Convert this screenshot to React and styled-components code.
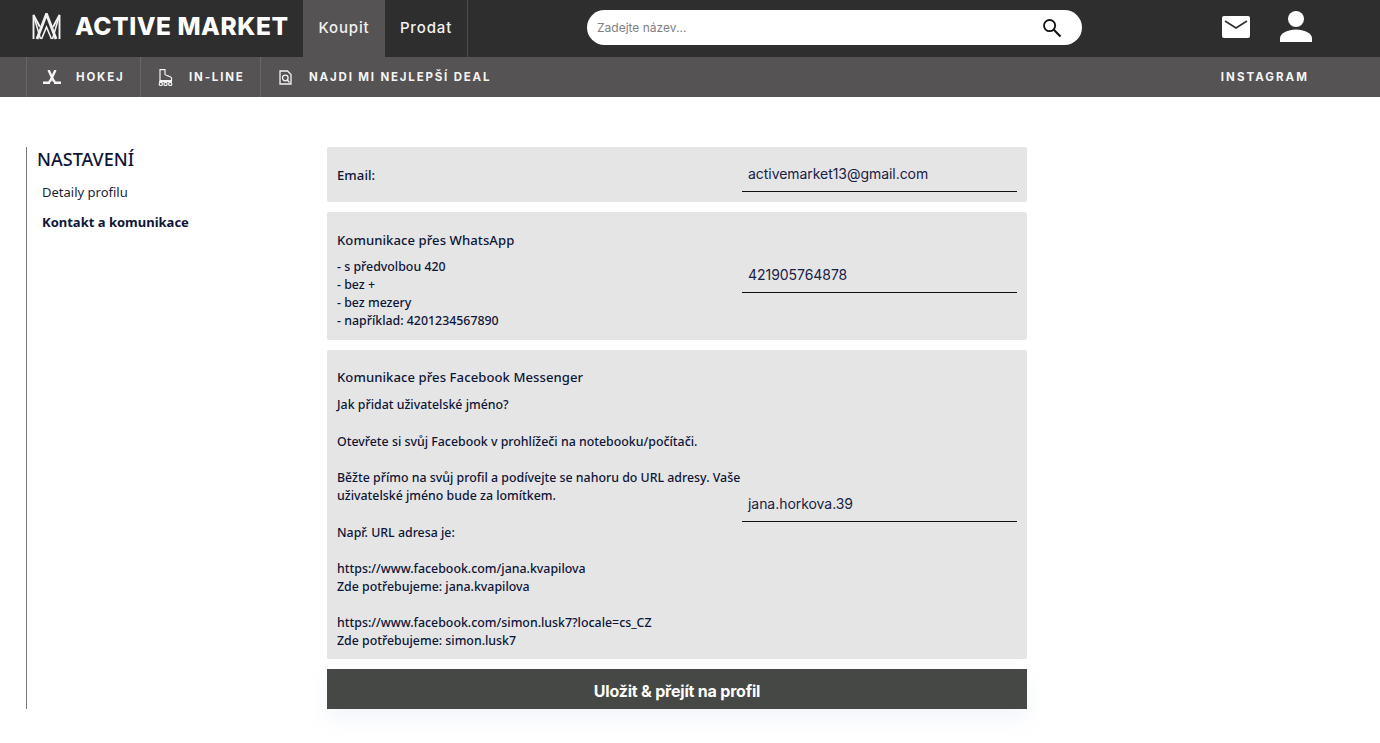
import React from "react";
import styled, { createGlobalStyle } from "styled-components";

const Global = createGlobalStyle`
  html, body { margin: 0; padding: 0; background: #fff; overflow: hidden; height: 743px; }
  * { box-sizing: border-box; }
`;
const display = `"Inter", "Liberation Sans", sans-serif`;
const body = `"Noto Sans", "Open Sans", sans-serif`;

const TopBar = styled.header`
  height: 57px; background: #2e2e2e; display: flex; align-items: stretch; position: relative;
`;
const Brand = styled.div`
  width: 303px; padding: 0 0 4px 32px; display: flex; align-items: center; gap: 14px; color: #fff;
`;
const BrandName = styled.span`
  font: 800 25px/1 ${display}; letter-spacing: 0.55px; white-space: nowrap; transform: scaleX(0.98); transform-origin: left;
`;
const Tab = styled.a`
  width: ${p => p.$w}px; display: flex; align-items: center; justify-content: center; padding-bottom: 2px;
  font: 500 15px/1 ${display}; letter-spacing: 0.85px; color: #f2f2f2;
  background: ${p => p.$active ? "#555353" : "transparent"};
  border-right: ${p => p.$line ? "1px solid #4c4c4c" : "none"};
`;
const SearchWrap = styled.div`
  margin-left: 119px; margin-top: 10px; width: 495px; height: 35px; border-radius: 18px; background: #fff;
  display: flex; align-items: center; justify-content: space-between; padding: 0 20px 0 10px;
`;
const SearchText = styled.span`
  font: 400 12px/1 ${display}; color: #808080;
`;
const IconGroup = styled.div`
  margin-left: 140px; padding-bottom: 4px; display: flex; align-items: center; gap: 30px;
`;
const SubBar = styled.nav`
  height: 40px; background: #555353; display: flex; align-items: stretch; padding-left: 26px;
`;
const SubItem = styled.a`
  width: ${p => p.$w}px; display: flex; align-items: center; padding-left: ${p => p.$pad}px;
  gap: ${p => p.$gap}px; color: #f5f5f5; border-left: 1px solid #696767;
  font: 700 11.5px/1 ${display}; letter-spacing: 1.82px; white-space: nowrap;
`;
const SubText = styled.span`padding-top: 2px;`;
const SubRight = styled.a`
  margin-left: auto; margin-right: 71px; align-self: center; padding-top: 2px; color: #f5f5f5;
  font: 700 11.5px/1 ${display}; letter-spacing: 2.05px;
`;
const Main = styled.main`
  display: flex; align-items: flex-start; padding: 50px 0 0 26px;
`;
const Sidebar = styled.aside`
  width: 301px; height: 562px; border-left: 1px solid #777; padding-left: 10px;
`;
const SideTitle = styled.h2`
  margin: 0; font: 500 18px/24px ${body}; color: #0e1638;
`;
const SideLink = styled.div`
  margin: ${p => p.$mt}px 0 0 5px; font: ${p => p.$bold ? 700 : 400} 13px/18px ${body};
  color: ${p => p.$bold ? "#0e1638" : "#1b1f35"};
`;
const Form = styled.form`
  width: 700px; display: flex; flex-direction: column; gap: 10px;
`;
const Row = styled.section`
  background: #e5e5e5; border-radius: 2px; height: ${p => p.$h}px; padding: 0 10px;
  display: flex; align-items: center; justify-content: space-between;
`;
const Info = styled.div`
  width: 405px; padding-top: ${p => p.$pt}px; color: #0e1638; font: 500 12.36px/18.15px ${body};
`;
const Label = styled.div`
  font: 500 13.1px/18px ${body}; letter-spacing: 0.07px; color: #0e1638; margin-bottom: ${p => p.$mb || 0}px;
`;
const Lines = styled.div`white-space: pre-line;`;
const Field = styled.div`
  width: 275px; height: ${p => p.$h || 36}px; padding: 0 6px; margin-top: ${p => p.$mt || 0}px; display: flex; align-items: center;
  border-bottom: 1px solid #111; color: #1a2145; font: 400 14px/1 ${display}; letter-spacing: -0.05px;
`;
const SaveButton = styled.button`
  height: 40px; border: 0; background: #454845; color: #fff; border-radius: 0; padding: 0;
  font: 700 16px/45px ${display}; letter-spacing: -0.2px; text-align: center;
  box-shadow: 0 10px 20px rgba(160, 175, 215, 0.13);
  display: block; width: 100%; overflow: hidden;
`;

const Logo = () => (
  <svg width="29" height="27" viewBox="0 0 29 27" fill="none" stroke="#f2f2f2" strokeWidth="1.9">
    <path d="M1.5 26V2L8 14M27.5 26V2L21 14" />
    <path d="M1.5 2L8.5 26M27.5 2L20.5 26" strokeWidth="1.5" />
    <path d="M5 26L14.5 1L24 26" strokeWidth="2.8" />
    <path d="M9.5 26L14.5 14L19.5 26" strokeWidth="1.6" />
  </svg>
);
const Search = () => (
  <svg width="20" height="20" viewBox="0 0 20 20" fill="none" stroke="#111" strokeWidth="1.8">
    <circle cx="7.6" cy="7.6" r="5.6" /><path d="M11.8 11.8L18.5 18.5" strokeWidth="2.1" />
  </svg>
);
const Mail = () => (
  <svg width="28" height="22" viewBox="0 0 28 22">
    <rect width="28" height="22" rx="2" fill="#fff" />
    <path d="M3 5L14 12L25 5" fill="none" stroke="#2e2e2e" strokeWidth="1.6" />
  </svg>
);
const User = () => (
  <svg width="32" height="31" viewBox="0 0 32 31" fill="#fff">
    <circle cx="16" cy="8" r="8" />
    <path d="M0 31V27.5C0 22 8 18.5 16 18.5S32 22 32 27.5V31Z" />
  </svg>
);
const Stick = () => (
  <svg width="18" height="14" viewBox="0 0 18 14" fill="none" stroke="#f5f5f5">
    <path d="M5.5 0L10.5 10.5L12 12M12.5 0L7.5 10.5L6 12" strokeWidth="2.4" />
    <path d="M0 12.7H7M11 12.7H18" strokeWidth="2.4" />
  </svg>
);
const Skate = () => (
  <svg width="15" height="17" viewBox="0 0 15 17" fill="none" stroke="#f5f5f5" strokeWidth="1.2">
    <path d="M2 .7H7V5.5C8 7 13 7 13.5 9V11.5H2ZM1 12.7H14" />
    <circle cx="2.8" cy="15" r="1.6" /><circle cx="7.5" cy="15" r="1.6" /><circle cx="12.2" cy="15" r="1.6" />
  </svg>
);
const Deal = () => (
  <svg width="13" height="15" viewBox="0 0 13 15" fill="none" stroke="#f5f5f5" strokeWidth="1.3">
    <path d="M1 1H8.5L12 4.5V14H1Z" /><circle cx="6.3" cy="8" r="2.8" /><path d="M8.3 10L10.5 12.5" />
  </svg>
);

export default function App() {
  return (
    <>
      <Global />
      <TopBar>
        <Brand><Logo /><BrandName>ACTIVE MARKET</BrandName></Brand>
        <Tab $w={82} $active>Koupit</Tab>
        <Tab $w={83} $line>Prodat</Tab>
        <SearchWrap><SearchText>Zadejte název...</SearchText><Search /></SearchWrap>
        <IconGroup><Mail /><User /></IconGroup>
      </TopBar>
      <SubBar>
        <SubItem $w={114} $pad={16} $gap={15}><Stick /><SubText>HOKEJ</SubText></SubItem>
        <SubItem $w={120} $pad={17} $gap={16}><Skate /><SubText>IN-LINE</SubText></SubItem>
        <SubItem $w={260} $pad={18} $gap={17}><Deal /><SubText>NAJDI MI NEJLEPŠÍ DEAL</SubText></SubItem>
        <SubRight>INSTAGRAM</SubRight>
      </SubBar>
      <Main>
        <Sidebar>
          <SideTitle>NASTAVENÍ</SideTitle>
          <SideLink $mt={12}>Detaily profilu</SideLink>
          <SideLink $mt={12} $bold>Kontakt a komunikace</SideLink>
        </Sidebar>
        <Form>
          <Row $h={55}>
            <Label>Email:</Label>
            <Field $mt={-1}>activemarket13@gmail.com</Field>
          </Row>
          <Row $h={128}>
            <Info $pt={9}>
              <Label $mb={9}>Komunikace přes WhatsApp</Label>
              <Lines>{"- s předvolbou 420\n- bez +\n- bez mezery\n- například: 4201234567890"}</Lines>
            </Info>
            <Field $h={35} $mt={-2}>421905764878</Field>
          </Row>
          <Row $h={309}>
            <Info $pt={10}>
              <Label $mb={10}>Komunikace přes Facebook Messenger</Label>
              <Lines>{"Jak přidat uživatelské jméno?\n\nOtevřete si svůj Facebook v prohlížeči na notebooku/počítači.\n\nBěžte přímo na svůj profil a podívejte se nahoru do URL adresy. Vaše uživatelské jméno bude za lomítkem.\n\nNapř. URL adresa je:\n\nhttps://www.facebook.com/jana.kvapilova\nZde potřebujeme: jana.kvapilova\n\nhttps://www.facebook.com/simon.lusk7?locale=cs_CZ\nZde potřebujeme: simon.lusk7"}</Lines>
            </Info>
            <Field $mt={-1}>jana.horkova.39</Field>
          </Row>
          <SaveButton type="button">Uložit &amp; přejít na profil</SaveButton>
        </Form>
      </Main>
    </>
  );
}
